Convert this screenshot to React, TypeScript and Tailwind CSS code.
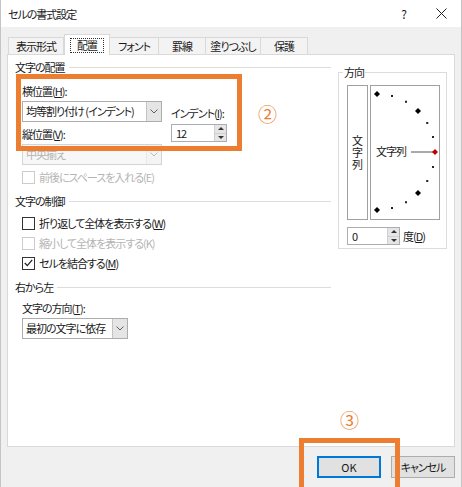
import React from "react";

const orange = "border-[#ed7d31]";

function Chevron() {
  return (
    <svg width="8" height="5" viewBox="0 0 8 5">
      <path d="M0.5 0.5 L4 4 L7.5 0.5" fill="none" stroke="#606060" strokeWidth="1" />
    </svg>
  );
}

function Dropdown({ text, width, disabled }: { text: string; width: string; disabled?: boolean }) {
  return (
    <div
      className={`flex h-[21px] items-center border ${disabled ? "border-[#d4d4d4] bg-[#f7f7f7]" : "border-[#adadad] bg-white"} ${width}`}
    >
      <span className={`flex-1 truncate pl-[3px] leading-[19px] ${disabled ? "text-[#b4b4b4]" : "text-[#1a1a1a]"}`}>
        {text}
      </span>
      <span
        className={`flex h-full w-[15px] items-center justify-center border-l ${disabled ? "border-[#d4d4d4] bg-[#f0f0f0] opacity-40" : "border-[#c4c4c4] bg-[#e5e5e5]"}`}
      >
        <Chevron />
      </span>
    </div>
  );
}

function Spin({ value, width }: { value: string; width: string }) {
  return (
    <div className={`flex h-[18px] items-center border border-[#abadb3] bg-white ${width}`}>
      <span className="flex-1 pl-[4px] leading-[16px] text-[#1a1a1a]">{value}</span>
      <span className="flex h-full w-[12px] flex-col border-l border-[#d0d0d0] bg-[#e5e5e5]">
        <span className="flex flex-1 items-center justify-center border-b border-[#d0d0d0]">
          <svg width="6" height="3" viewBox="0 0 6 3">
            <path d="M0 3 L3 0 L6 3 Z" fill="#333" />
          </svg>
        </span>
        <span className="flex flex-1 items-center justify-center">
          <svg width="6" height="3" viewBox="0 0 6 3">
            <path d="M0 0 L3 3 L6 0 Z" fill="#333" />
          </svg>
        </span>
      </span>
    </div>
  );
}

function Check({ label, checked, disabled, className = "" }: { label: React.ReactNode; checked?: boolean; disabled?: boolean; className?: string }) {
  return (
    <div className={`flex h-[14px] items-center gap-[4px] pl-[7px] ${className}`}>
      <span
        className={`flex h-[13px] w-[13px] items-center justify-center border bg-white ${disabled ? "border-[#cccccc]" : "border-[#333333]"}`}
      >
        {checked && (
          <svg width="9" height="8" viewBox="0 0 9 8">
            <path d="M0.8 4 L3.3 6.6 L8.2 0.8" fill="none" stroke="#222" strokeWidth="1.3" />
          </svg>
        )}
      </span>
      <span className={disabled ? "text-[#b4b4b4]" : "text-[#1a1a1a]"}>{label}</span>
    </div>
  );
}

function Section({ title, className = "" }: { title: string; className?: string }) {
  return (
    <div className={`flex h-[14px] items-center gap-[4px] ${className}`}>
      <span className="text-[#1a1a1a]">{title}</span>
      <span className="h-px flex-1 bg-[#dcdcdc]" />
    </div>
  );
}

function Tab({ label, width, active }: { label: string; width: string; active?: boolean }) {
  if (active) {
    return (
      <div className={`relative z-10 -mb-px flex h-[21px] items-center justify-center border border-b-0 border-[#d9d9d9] bg-white ${width}`}>
        <span className="border border-dotted border-[#333] px-[6px] leading-[13px]">{label}</span>
      </div>
    );
  }
  return (
    <div className={`flex h-[17px] items-center justify-center border border-b-0 border-l-0 border-[#d9d9d9] bg-[#f3f3f3] ${width}`}>
      {label}
    </div>
  );
}

function Orientation() {
  const cx = 6;
  const cy = 66;
  const r = 58;
  const dots = [];
  for (let a = 90; a >= -90; a -= 15) {
    const rad = (a * Math.PI) / 180;
    const x = cx + r * Math.cos(rad);
    const y = cy - r * Math.sin(rad);
    const big = a % 45 === 0;
    if (big) {
      const s = 3;
      dots.push(
        <path
          key={a}
          d={`M${x} ${y - s} L${x + s} ${y} L${x} ${y + s} L${x - s} ${y} Z`}
          fill={a === 0 ? "#c00000" : "#000"}
        />,
      );
    } else {
      dots.push(<rect key={a} x={x - 1} y={y - 1} width="2" height="2" fill="#222" />);
    }
  }
  return (
    <svg width="68" height="133" viewBox="0 0 68 133">
      <line x1="40" y1="66" x2="62" y2="66" stroke="#555" strokeWidth="1" />
      {dots}
      <text x="5" y="70" fontSize="11" letterSpacing="-1" fill="#1a1a1a">
        文字列
      </text>
    </svg>
  );
}

export default function App() {
  return (
    <div className="relative h-[487px] w-[462px] overflow-hidden border-x border-[#c4c4c4] bg-[#f0f0f0] font-['Noto_Sans_CJK_JP',sans-serif] text-[11px] leading-[14px] tracking-[-1px] text-[#1a1a1a] [font-feature-settings:'palt']">
      {/* title bar */}
      <div className="flex h-[27px] items-center bg-white pl-[7px] pr-[14px]">
        <span className="flex-1">セルの書式設定</span>
        <span className="mr-[30px] text-[12px]">?</span>
        <svg width="11" height="11" viewBox="0 0 11 11">
          <path d="M0.5 0.5 L10.5 10.5 M10.5 0.5 L0.5 10.5" stroke="#222" strokeWidth="1" />
        </svg>
      </div>

      {/* tabs */}
      <div className="mt-[7px] flex items-end pl-[7px]">
        <div className="flex h-[17px] w-[56px] items-center justify-center border border-b-0 border-[#d9d9d9] bg-[#f3f3f3]">表示形式</div>
        <Tab label="配置" width="w-[46px]" active />
        <Tab label="フォント" width="w-[49px]" />
        <Tab label="罫線" width="w-[47px]" />
        <Tab label="塗りつぶし" width="w-[55px]" />
        <Tab label="保護" width="w-[47px]" />
      </div>

      {/* panel */}
      <div className="mx-[6px] flex h-[393px] border border-[#d9d9d9] bg-white pl-[7px] pr-[6px]">
        <div className="w-[316px] pt-[5px]">
          <Section title="文字の配置" />
          <div className="mt-[10px] flex pl-[7px]">
            <div className="w-[140px]">
              <div className="h-[14px]">
                横位置(<span className="underline">H</span>):
              </div>
              <div className="mt-[3px]">
                <Dropdown text="均等割り付け (インデント)" width="w-[140px]" />
              </div>
              <div className="mt-[5px] h-[14px]">
                縦位置(<span className="underline">V</span>):
              </div>
              <div className="mt-[3px]">
                <Dropdown text="中央揃え" width="w-[140px]" disabled />
              </div>
            </div>
            <div className="ml-[9px]">
              <div className="mt-[22px] h-[14px]">
                インデント(<span className="underline">I</span>):
              </div>
              <div className="mt-[4px]">
                <Spin value="12" width="w-[56px]" />
              </div>
            </div>
          </div>
          <Check className="mt-[5px]" label="前後にスペースを入れる(E)" disabled />

          <Section title="文字の制御" className="mt-[10px]" />
          <Check className="mt-[8px]" label={<>折り返して全体を表示する(<span className="underline">W</span>)</>} />
          <Check className="mt-[6px]" label="縮小して全体を表示する(K)" disabled />
          <Check className="mt-[6px]" checked label={<>セルを結合する(<span className="underline">M</span>)</>} />

          <Section title="右から左" className="mt-[10px]" />
          <div className="mt-[7px] h-[14px] pl-[7px]">
            文字の方向(<span className="underline">T</span>):
          </div>
          <div className="mt-[3px] pl-[7px]">
            <Dropdown text="最初の文字に依存" width="w-[106px]" />
          </div>
        </div>

        <fieldset className="ml-[7px] mt-[10px] h-[184px] w-[109px] border border-[#dcdcdc] pl-[8px]">
          <legend className="ml-[-4px] px-[1px]">方向</legend>
          <div className="mt-[6px] flex gap-[2px]">
            <div className="flex h-[135px] w-[21px] items-center justify-center border border-[#a0a0a0]">
              <span className="text-[11px] leading-[14px] tracking-[1px] [writing-mode:vertical-rl]">文字列</span>
            </div>
            <div className="h-[135px] w-[70px] border border-[#a0a0a0]">
              <Orientation />
            </div>
          </div>
          <div className="mt-[7px] flex items-center gap-[3px]">
            <Spin value="0" width="w-[53px]" />
            <span>
              度(<span className="underline">D</span>)
            </span>
          </div>
        </fieldset>
      </div>

      {/* buttons */}
      <div className="mt-[9px] flex justify-end gap-[10px] pr-[6px]">
        <button className="h-[22px] w-[64px] border-2 border-[#0078d7] bg-[#e1e1e1] tracking-normal">OK</button>
        <button className="h-[22px] w-[64px] border border-[#adadad] bg-[#e1e1e1]">キャンセル</button>
      </div>

      {/* annotations */}
      <div className={`absolute left-[15px] top-[74px] h-[77px] w-[226px] border-[5px] ${orange}`} />
      <span className="absolute left-[257px] top-[103px] text-[19px] leading-[22px] tracking-normal text-[#ed7d31]">②</span>
      <div className={`absolute left-[298px] top-[438px] h-[56px] w-[101px] border-[5px] ${orange}`} />
      <span className="absolute left-[339px] top-[409px] text-[19px] leading-[22px] tracking-normal text-[#ed7d31]">③</span>
    </div>
  );
}
